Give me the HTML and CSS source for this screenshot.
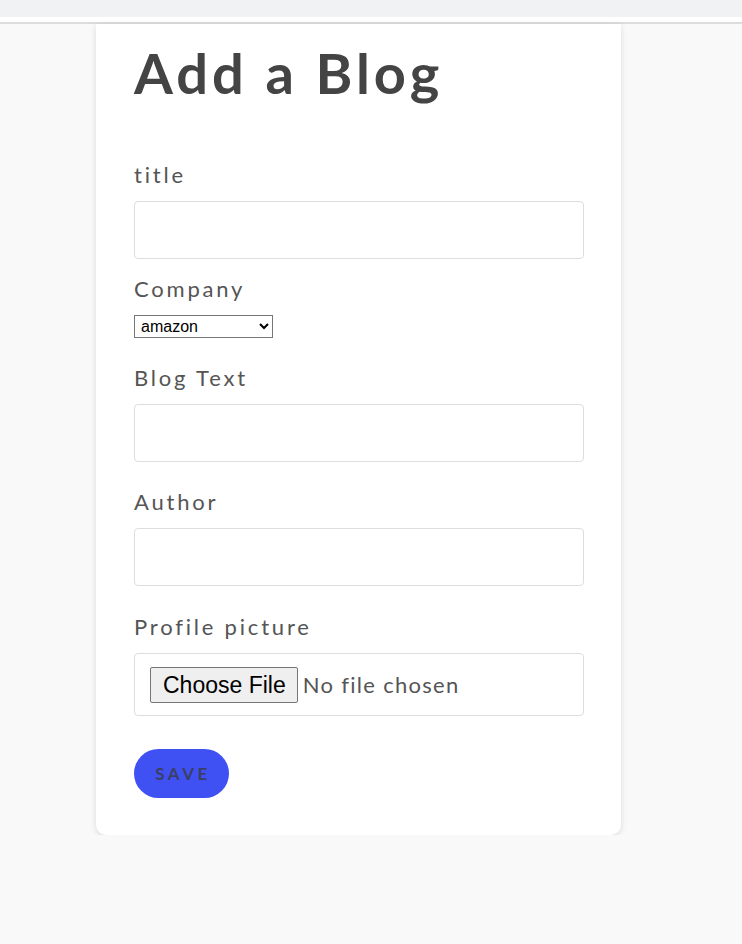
FILE: index.html
```html
<!DOCTYPE html>
<html lang="en">
<head>
<meta charset="utf-8">
<title>Add a Blog</title>
<link rel="stylesheet" href="styles.css">
</head>
<body>
<div class="topbar"></div>
<main class="page">
  <section class="card">
    <h1 class="heading">Add a Blog</h1>
    <form class="form">
      <label class="label" for="title">title</label>
      <input class="field field-first" id="title" type="text">
      <label class="label label-company" for="company">Company</label>
      <select class="select" id="company">
        <option>amazon</option>
        <option>google</option>
        <option>microsoft</option>
      </select>
      <label class="label label-spaced" for="text">Blog Text</label>
      <input class="field" id="text" type="text">
      <label class="label label-spaced" for="author">Author</label>
      <input class="field" id="author" type="text">
      <label class="label label-profile" for="pic">Profile picture</label>
      <input class="file" id="pic" type="file">
      <button class="save" type="button">Save</button>
    </form>
  </section>
</main>
</body>
</html>
```
FILE: styles.css
```css
html, body {
  margin: 0;
  padding: 0;
}
body {
  background: #f9f9f9;
  font-family: Lato, "Open Sans", sans-serif;
  color: #555;
}
.topbar {
  height: 17px;
  background: #f1f2f4;
  border-bottom: 5px solid #ffffff;
  box-shadow: 0 2px 0 #dcdcdc;
  margin-bottom: 2px;
}
.page {
  padding-left: 96px;
}
.card {
  width: 525px;
  box-sizing: border-box;
  background: #fff;
  border-radius: 0 0 10px 10px;
  box-shadow: 0 2px 6px rgba(0, 0, 0, 0.12);
  padding: 15px 37px 37px 38px;
}
.heading {
  margin: 0;
  font-size: 56px;
  line-height: 1.2;
  font-weight: 700;
  color: #444;
  letter-spacing: 4px;
}
.form {
  display: flex;
  flex-direction: column;
  align-items: flex-start;
  padding-top: 56px;
}
.label {
  display: block;
  font-size: 22px;
  line-height: 26px;
  letter-spacing: 2.8px;
  color: #555;
  margin-bottom: 13px;
}
.label-company {
  margin-top: 17px;
  margin-bottom: 13px;
}
.label-spaced {
  margin-top: 27px;
}
.label-profile {
  margin-top: 28px;
}
.field {
  width: 450px;
  height: 58px;
  box-sizing: border-box;
  border: 1px solid #ddd;
  border-radius: 4px;
  background: #fff;
  font-family: inherit;
  font-size: 20px;
  padding: 0 12px;
}
.select {
  width: 139px;
  height: 23px;
  box-sizing: border-box;
  font-family: "Liberation Sans", Arial, sans-serif;
  font-size: 16px;
  color: #000;
  border: 1px solid #767676;
  border-radius: 0;
  background: #fff;
  padding: 0 0 0 2px;
  margin: 0;
}
.file {
  width: 450px;
  height: 63px;
  box-sizing: border-box;
  border: 1px solid #ddd;
  border-radius: 4px;
  background: #fff;
  padding: 13px 15px 12px;
  font-family: inherit;
  font-size: 22px;
  letter-spacing: 1.3px;
  color: #555;
}
.file::file-selector-button {
  font-family: "Liberation Sans", Arial, sans-serif;
  font-size: 23px;
  letter-spacing: 0;
  color: #000;
  background: #efefef;
  border: 1px solid #767676;
  border-radius: 2px;
  padding: 3px 11px 3px 12px;
  height: 36px;
  margin-right: 5px;
}
.save {
  margin-top: 33px;
  width: 95px;
  height: 49px;
  border: none;
  border-radius: 25px;
  background: #3f51f3;
  color: #3a3f66;
  font-family: inherit;
  font-weight: 700;
  font-size: 17px;
  letter-spacing: 3.5px;
  text-transform: uppercase;
  padding: 0 0 0 3px;
}
```
